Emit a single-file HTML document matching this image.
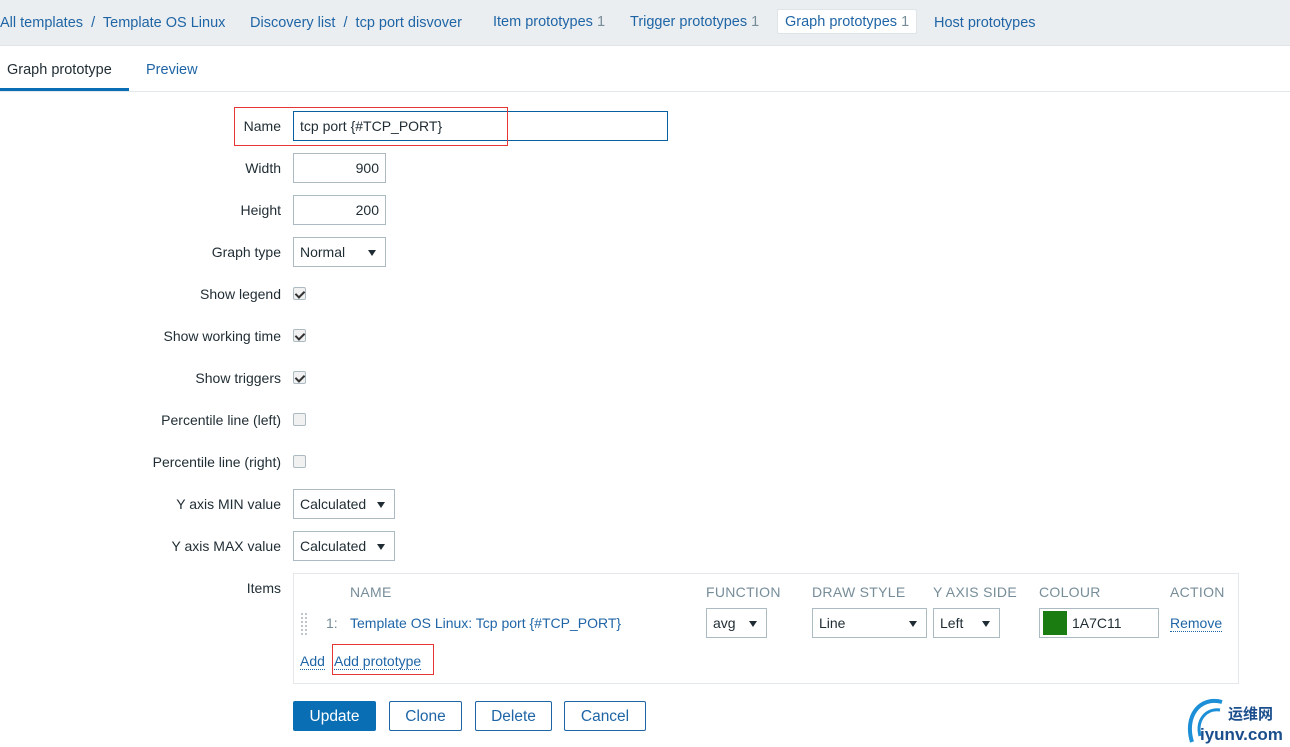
<!DOCTYPE html>
<html><head><meta charset="utf-8">
<style>
*{box-sizing:border-box;margin:0;padding:0}
body{width:1290px;height:747px;background:#fff;font-family:"Liberation Sans",Arial,sans-serif;font-size:14px;color:#1f2c33;position:relative;overflow:hidden}
.a{position:absolute;white-space:nowrap}
a,.lk{color:#1f65a6;text-decoration:none}
.top{position:absolute;left:0;top:0;width:1290px;height:46px;background:#ebeef0;border-bottom:1px solid #dfe4e7}
.cnt{color:#768d99}
.lbl{position:absolute;right:1009px;text-align:right;font-size:14px;color:#1f2c33}
.inp{position:absolute;border:1px solid #acbbc2;background:#fff;height:30px;font-size:14px;line-height:29px;padding:0 6px}
.sel:after{content:"";position:absolute;right:9px;top:12px;border-left:4px solid transparent;border-right:4px solid transparent;border-top:6px solid #1f2c33}
.cb{position:absolute;left:293px;width:13px;height:13px;border:1px solid #acbbc2;background:#f1f1f1;border-radius:2px}
.cb.c:after{content:"";position:absolute;left:3px;top:1px;width:4px;height:7px;border:solid #333;border-width:0 2px 2px 0;transform:rotate(45deg)}
.th{position:absolute;top:584px;font-size:14px;color:#768d99;letter-spacing:.3px}
.btn{position:absolute;top:701px;height:30px;border:1px solid #1f65a6;color:#1f65a6;background:#fff;font-size:15.5px;line-height:29px;text-align:center;border-radius:2px}
.dl{border-bottom:1px dotted #1f65a6}
</style></head><body>
<div class="top"></div>
<div class="a lk" style="left:0;top:15px;font-size:14.5px">All templates &nbsp;/&nbsp; Template OS Linux</div>
<div class="a lk" style="left:250px;top:15px;font-size:14.5px">Discovery list &nbsp;/&nbsp; tcp port disvover</div>
<div class="a lk" style="left:493px;top:14px;font-size:14.5px">Item prototypes <span class="cnt">1</span></div>
<div class="a lk" style="left:630px;top:14px;font-size:14.5px">Trigger prototypes <span class="cnt">1</span></div>
<div class="a" style="left:777px;top:9px;width:140px;height:25px;background:#fff;border:1px solid #dfe4e7;border-radius:2px"></div>
<div class="a lk" style="left:785px;top:14px;font-size:14.5px">Graph prototypes <span class="cnt">1</span></div>
<div class="a lk" style="left:934px;top:15px;font-size:14.5px">Host prototypes</div>

<div class="a" style="left:7px;top:62px;font-size:14.5px;color:#1f2c33">Graph prototype</div>
<div class="a lk" style="left:146px;top:62px;font-size:14.5px">Preview</div>
<div class="a" style="left:0;top:88px;width:129px;height:3px;background:#0a6eb4"></div>
<div class="a" style="left:0;top:91px;width:1290px;height:1px;background:#e5e8ea"></div>

<div class="lbl" style="top:118px">Name</div>
<div class="inp" style="left:293px;top:111px;width:375px;border-color:#0a5fa0;color:#1f2c33">tcp port {#TCP_PORT}</div>
<div class="a" style="left:234px;top:107px;width:274px;height:39px;border:1px solid #e53535"></div>
<div class="lbl" style="top:160px">Width</div>
<div class="inp" style="left:293px;top:153px;width:93px;text-align:right">900</div>
<div class="lbl" style="top:202px">Height</div>
<div class="inp" style="left:293px;top:195px;width:93px;text-align:right">200</div>
<div class="lbl" style="top:244px">Graph type</div>
<div class="inp sel" style="left:293px;top:237px;width:93px">Normal</div>
<div class="lbl" style="top:286px">Show legend</div><div class="cb c" style="top:287px"></div>
<div class="lbl" style="top:328px">Show working time</div><div class="cb c" style="top:329px"></div>
<div class="lbl" style="top:370px">Show triggers</div><div class="cb c" style="top:371px"></div>
<div class="lbl" style="top:412px">Percentile line (left)</div><div class="cb" style="top:413px"></div>
<div class="lbl" style="top:454px">Percentile line (right)</div><div class="cb" style="top:455px"></div>
<div class="lbl" style="top:496px">Y axis MIN value</div>
<div class="inp sel" style="left:293px;top:489px;width:102px">Calculated</div>
<div class="lbl" style="top:538px">Y axis MAX value</div>
<div class="inp sel" style="left:293px;top:531px;width:102px">Calculated</div>
<div class="lbl" style="top:580px">Items</div>

<div class="a" style="left:293px;top:573px;width:946px;height:111px;border:1px solid #e5e8ea"></div>
<div class="th" style="left:350px">NAME</div>
<div class="th" style="left:706px">FUNCTION</div>
<div class="th" style="left:812px">DRAW STYLE</div>
<div class="th" style="left:933px">Y AXIS SIDE</div>
<div class="th" style="left:1039px">COLOUR</div>
<div class="th" style="left:1170px">ACTION</div>
<div class="a" style="left:300px;top:612px;width:8px;height:24px;background-image:radial-gradient(#b8c2c7 1px,transparent 1.2px);background-size:4px 4px"></div>
<div class="a" style="left:326px;top:615px;color:#768d99">1:</div>
<div class="a lk" style="left:350px;top:615px">Template OS Linux: Tcp port {#TCP_PORT}</div>
<div class="inp sel" style="left:706px;top:608px;width:61px">avg</div>
<div class="inp sel" style="left:812px;top:608px;width:115px">Line</div>
<div class="inp sel" style="left:933px;top:608px;width:67px">Left</div>
<div class="inp" style="left:1039px;top:608px;width:120px;padding-left:32px">1A7C11</div>
<div class="a" style="left:1043px;top:611px;width:24px;height:24px;background:#1a7c11"></div>
<div class="a lk dl" style="left:1170px;top:615px">Remove</div>
<div class="a lk dl" style="left:300px;top:653px">Add</div>
<div class="a lk dl" style="left:334px;top:653px">Add prototype</div>
<div class="a" style="left:332px;top:644px;width:102px;height:31px;border:1px solid #e53535"></div>

<div class="btn" style="left:293px;width:83px;background:#0a6eb4;border-color:#0a6eb4;color:#fff">Update</div>
<div class="btn" style="left:389px;width:73px">Clone</div>
<div class="btn" style="left:475px;width:77px">Delete</div>
<div class="btn" style="left:564px;width:82px">Cancel</div>

<svg class="a" style="left:1184px;top:698px" width="44" height="49" viewBox="0 0 44 49"><path d="M38 4 C16 -2 0 18 8 44" stroke="#1c8fd6" stroke-width="4" fill="none"/><path d="M36 12 C22 10 12 22 16 38" stroke="#1c8fd6" stroke-width="3" fill="none"/></svg>
<div class="a" style="left:1228px;top:703px;font-family:'Noto Sans CJK SC',sans-serif;font-size:15px;font-weight:bold;color:#1b4e8c">运维网</div>
<div class="a" style="left:1200px;top:725px;font-size:17px;font-weight:bold;color:#1b4e8c">iyunv.com</div>
</body></html>
